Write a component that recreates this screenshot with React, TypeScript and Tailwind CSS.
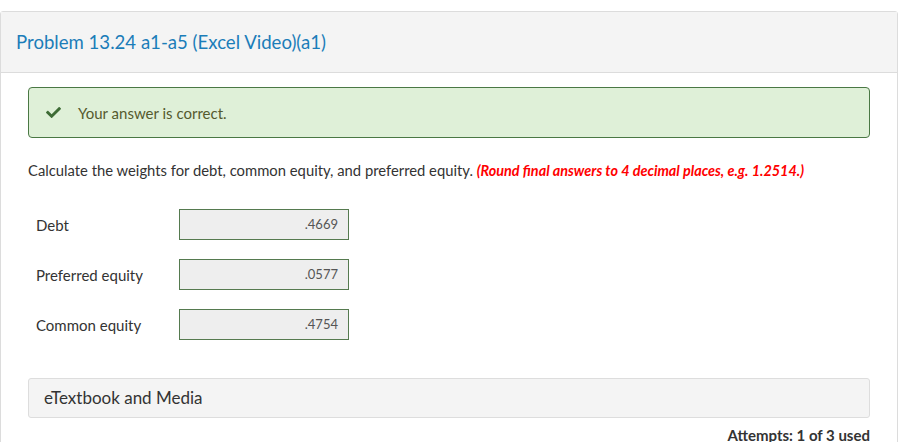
import React from "react";
import { FaCheck } from "react-icons/fa";

const rows = [
  { label: "Debt", value: ".4669" },
  { label: "Preferred equity", value: ".0577" },
  { label: "Common equity", value: ".4754" },
];

export default function App() {
  return (
    <div
      className="w-[903px] h-[442px] overflow-hidden bg-white pt-[11px]"
      style={{ fontFamily: "Lato, 'Open Sans', sans-serif" }}
    >
      <div className="w-[898px] h-[460px] border border-[#dcdcdc] rounded-tl-[3px] rounded-tr-[3px]">
        <div className="h-[61px] bg-[#f4f4f4] border-b border-[#dcdcdc] flex items-center pl-[15px]">
          <h1 className="text-[18.6px] text-[#1b7db9] font-normal leading-none">
            Problem 13.24 a1-a5 (Excel Video)(a1)
          </h1>
        </div>

        <div className="px-[27px] pt-[14px]">
          <div className="h-[51px] bg-[#dff0d8] border border-[#4a7844] rounded-[4px] flex items-center pl-[16px]">
            <FaCheck className="text-[#3d6b35] w-[17px] h-[15px]" />
            <span className="ml-[16px] text-[15px] leading-[20px] text-[#555a2e]">Your answer is correct.</span>
          </div>

          <p className="mt-[22px] text-[14.8px] leading-[20px] text-[#333333]">
            Calculate the weights for debt, common equity, and preferred equity.{" "}
            <span className="text-[#ff0000] text-[14.4px] font-bold italic">
              (Round final answers to 4 decimal places, e.g. 1.2514.)
            </span>
          </p>

          <div className="mt-[28px] flex flex-col gap-[19px]">
            {rows.map((r) => (
              <div key={r.label} className="flex items-center">
                <span className="w-[151px] pl-[8px] text-[15px] leading-[20px] text-[#333333]">{r.label}</span>
                <div className="w-[170px] h-[31px] bg-[#eeeeee] border border-[#557a4f] flex items-center justify-end pr-[10px] text-[13px] text-[#555555]">
                  {r.value}
                </div>
              </div>
            ))}
          </div>

          <div className="mt-[38px] h-[40px] bg-[#f4f4f4] border border-[#dddddd] rounded-[3px] flex items-center pl-[15px] text-[17px] text-[#333333]">
            eTextbook and Media
          </div>

          <div className="mt-[7px] text-right text-[15px] leading-[20px] font-bold text-[#333333]">
            Attempts: 1 of 3 used
          </div>
        </div>
      </div>
    </div>
  );
}
